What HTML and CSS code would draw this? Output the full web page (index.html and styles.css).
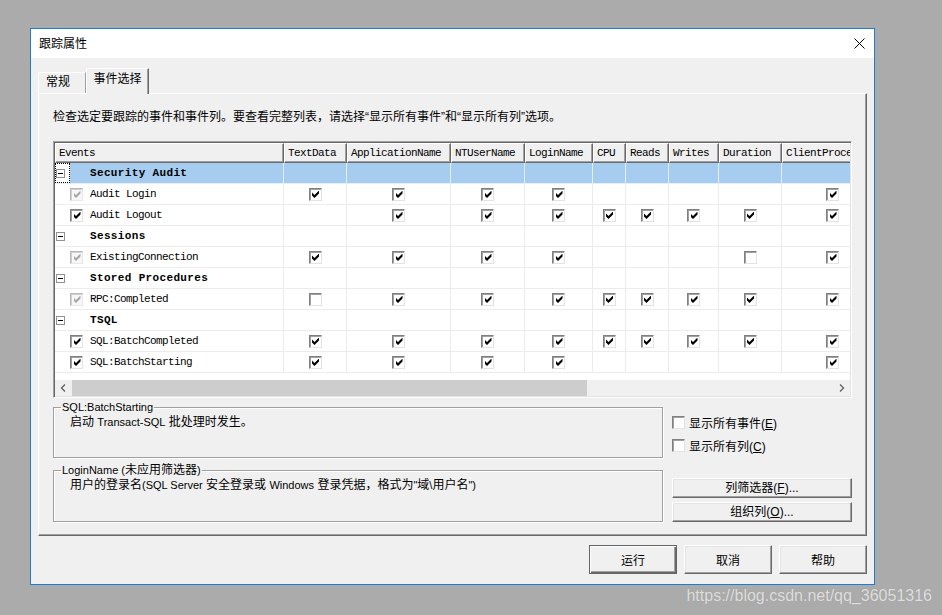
FILE: index.html
```html
<!DOCTYPE html>
<html lang="zh-CN">
<head>
<meta charset="utf-8">
<title>跟踪属性</title>
<link rel="stylesheet" href="styles.css">
</head>
<body>
<div class="dialog">
  <div class="titlebar">
    <span class="title">跟踪属性</span>
    <svg class="close" width="11" height="11" viewBox="0 0 11 11"><path d="M0.5 0.5L10.5 10.5M10.5 0.5L0.5 10.5" stroke="#000" stroke-width="1" fill="none"/></svg>
  </div>
  <div class="dbody">
    <div class="tabs">
      <div class="tab">常规</div>
      <div class="tab sel">事件选择</div>
    </div>
    <div class="panel">
      <div class="instr">检查选定要跟踪的事件和事件列。要查看完整列表，请选择“显示所有事件”和“显示所有列”选项。</div>
      <div class="grid">
        <div class="gview">
          <div class="grow ghead">
            <div class="hc">Events</div><div class="hc">TextData</div><div class="hc">ApplicationName</div><div class="hc">NTUserName</div><div class="hc">LoginName</div><div class="hc">CPU</div><div class="hc">Reads</div><div class="hc">Writes</div><div class="hc">Duration</div><div class="hc">ClientProce</div>
          </div>
          <div class="grow hl">
            <div class="c ev"><span class="lead focus"><i class="exp"></i></span><b>Security Audit</b></div><div class="c"></div><div class="c"></div><div class="c"></div><div class="c"></div><div class="c"></div><div class="c"></div><div class="c"></div><div class="c"></div><div class="c"></div>
          </div>
          <div class="grow">
            <div class="c ev"><i class="ck on dis evck"></i><span>Audit Login</span></div><div class="c"><i class="ck on"></i></div><div class="c"><i class="ck on"></i></div><div class="c"><i class="ck on"></i></div><div class="c"><i class="ck on"></i></div><div class="c"></div><div class="c"></div><div class="c"></div><div class="c"></div><div class="c"><i class="ck on"></i></div>
          </div>
          <div class="grow">
            <div class="c ev"><i class="ck on evck"></i><span>Audit Logout</span></div><div class="c"></div><div class="c"><i class="ck on"></i></div><div class="c"><i class="ck on"></i></div><div class="c"><i class="ck on"></i></div><div class="c"><i class="ck on"></i></div><div class="c"><i class="ck on"></i></div><div class="c"><i class="ck on"></i></div><div class="c"><i class="ck on"></i></div><div class="c"><i class="ck on"></i></div>
          </div>
          <div class="grow">
            <div class="c ev"><span class="lead"><i class="exp"></i></span><b>Sessions</b></div><div class="c"></div><div class="c"></div><div class="c"></div><div class="c"></div><div class="c"></div><div class="c"></div><div class="c"></div><div class="c"></div><div class="c"></div>
          </div>
          <div class="grow">
            <div class="c ev"><i class="ck on dis evck"></i><span>ExistingConnection</span></div><div class="c"><i class="ck on"></i></div><div class="c"><i class="ck on"></i></div><div class="c"><i class="ck on"></i></div><div class="c"><i class="ck on"></i></div><div class="c"></div><div class="c"></div><div class="c"></div><div class="c"><i class="ck"></i></div><div class="c"><i class="ck on"></i></div>
          </div>
          <div class="grow">
            <div class="c ev"><span class="lead"><i class="exp"></i></span><b>Stored Procedures</b></div><div class="c"></div><div class="c"></div><div class="c"></div><div class="c"></div><div class="c"></div><div class="c"></div><div class="c"></div><div class="c"></div><div class="c"></div>
          </div>
          <div class="grow">
            <div class="c ev"><i class="ck on dis evck"></i><span>RPC:Completed</span></div><div class="c"><i class="ck"></i></div><div class="c"><i class="ck on"></i></div><div class="c"><i class="ck on"></i></div><div class="c"><i class="ck on"></i></div><div class="c"><i class="ck on"></i></div><div class="c"><i class="ck on"></i></div><div class="c"><i class="ck on"></i></div><div class="c"><i class="ck on"></i></div><div class="c"><i class="ck on"></i></div>
          </div>
          <div class="grow">
            <div class="c ev"><span class="lead"><i class="exp"></i></span><b>TSQL</b></div><div class="c"></div><div class="c"></div><div class="c"></div><div class="c"></div><div class="c"></div><div class="c"></div><div class="c"></div><div class="c"></div><div class="c"></div>
          </div>
          <div class="grow">
            <div class="c ev"><i class="ck on evck"></i><span>SQL:BatchCompleted</span></div><div class="c"><i class="ck on"></i></div><div class="c"><i class="ck on"></i></div><div class="c"><i class="ck on"></i></div><div class="c"><i class="ck on"></i></div><div class="c"><i class="ck on"></i></div><div class="c"><i class="ck on"></i></div><div class="c"><i class="ck on"></i></div><div class="c"><i class="ck on"></i></div><div class="c"><i class="ck on"></i></div>
          </div>
          <div class="grow">
            <div class="c ev"><i class="ck on evck"></i><span>SQL:BatchStarting</span></div><div class="c"><i class="ck on"></i></div><div class="c"><i class="ck on"></i></div><div class="c"><i class="ck on"></i></div><div class="c"><i class="ck on"></i></div><div class="c"></div><div class="c"></div><div class="c"></div><div class="c"></div><div class="c"><i class="ck on"></i></div>
          </div>
          <div class="gfill"></div>
        </div>
        <div class="hscroll">
          <span class="sarr"><svg width="17" height="16" viewBox="0 0 17 16"><path d="M10 4.5L6.5 8L10 11.5" stroke="#606060" stroke-width="1.3" fill="none"/></svg></span>
          <span class="strack"><span class="sthumb"></span></span>
          <span class="sarr"><svg width="17" height="16" viewBox="0 0 17 16"><path d="M7 4.5L10.5 8L7 11.5" stroke="#606060" stroke-width="1.3" fill="none"/></svg></span>
        </div>
      </div>
      <div class="lower">
        <div class="lcol">
          <fieldset class="gbox">
            <legend><span class="lat">SQL:BatchStarting</span></legend>
            <p class="gtext">启动 <span class="lat">Transact-SQL</span> 批处理时发生。</p>
          </fieldset>
          <fieldset class="gbox gbox2">
            <legend><span class="lat">LoginName (</span>未应用筛选器<span class="lat">)</span></legend>
            <p class="gtext">用户的登录名<span class="lat">(SQL Server</span> 安全登录或 <span class="lat">Windows</span> 登录凭据，格式为<span class="lat">"</span>域<span class="lat">\</span>用户名<span class="lat">")</span></p>
          </fieldset>
        </div>
        <div class="rcol">
          <label class="opt"><i class="ck"></i><span>显示所有事件(<u>E</u>)</span></label>
          <label class="opt opt2"><i class="ck"></i><span>显示所有列(<u>C</u>)</span></label>
          <button class="btn wide first">列筛选器(<u>F</u>)...</button>
          <button class="btn wide">组织列(<u>O</u>)...</button>
        </div>
      </div>
    </div>
    <div class="actions">
      <button class="btn act def">运行</button>
      <button class="btn act">取消</button>
      <button class="btn act">帮助</button>
    </div>
  </div>
</div>
<div class="watermark">https://blog.csdn.net/qq_36051316</div>
</body>
</html>
```

FILE: styles.css
```css
* { box-sizing: border-box; }
html, body { margin: 0; }
body {
  background: #ababab;
  padding: 28px 0 0 30px;
  height: 615px;
  overflow: hidden;
  position: relative;
  font-family: "Liberation Sans", "Noto Sans CJK SC", sans-serif;
  font-size: 12px;
  color: #000;
}
.dialog {
  width: 845px;
  height: 557px;
  border: 1px solid #1a7fd4;
  background: #f0f0f0;
  display: flex;
  flex-direction: column;
}
.titlebar {
  flex: none;
  height: 29px;
  background: #fff;
  display: flex;
  align-items: center;
  justify-content: space-between;
  padding: 0 9px 0 8px;
}
.title { font-size: 12px; line-height: 16px; }
.close { display: block; }
.dbody {
  flex: 1;
  display: flex;
  flex-direction: column;
  padding: 10px 7px 0 7px;
}
.tabs {
  flex: none;
  display: flex;
  align-items: flex-end;
  height: 25px;
}
.tab {
  height: 21px;
  width: 48px;
  padding-left: 7px;
  line-height: 19px;
  border-top: 1px solid #fff;
  border-left: 1px solid #fff;
  border-right: 1px solid #a0a0a0;
  border-top-left-radius: 2px;
  background: #f0f0f0;
}
.tab.sel {
  position: relative;
  z-index: 1;
  width: 63px;
  height: 26px;
  margin-bottom: -1px;
  padding-left: 0;
  text-align: center;
  line-height: 21px;
  border-right: 1px solid #696969;
  box-shadow: inset -1px 0 0 #a0a0a0;
}
.panel {
  flex: none;
  height: 443px;
  border-top: 1px solid #fff;
  border-left: 1px solid #fff;
  border-right: 1px solid #696969;
  border-bottom: 1px solid #696969;
  box-shadow: inset -1px -1px 0 #a0a0a0;
  padding: 15px 14px 0 14px;
}
.instr { line-height: 16px; height: 16px; white-space: nowrap; }
.grid {
  margin-top: 16px;
  width: 799px;
  height: 257px;
  border: 1px solid;
  border-color: #a0a0a0 #fff #fff #a0a0a0;
  box-shadow: inset 1px 1px 0 #696969, inset -1px -1px 0 #e3e3e3;
  padding: 1px 1px 1px 1px;
  background: #fff;
  display: flex;
  flex-direction: column;
}
.gview {
  flex: 1;
  overflow: hidden;
  font-family: "Liberation Mono", monospace;
  font-size: 11px;
  letter-spacing: -0.6px;
}
.grow {
  display: grid;
  grid-template-columns: 229px 63px 104px 74px 68px 33px 43px 50px 63px 102px;
  width: 829px;
  height: 21px;
}
.ghead { height: 20px; }
.hc {
  height: 20px;
  background: #f0f0f0;
  border-top: 1px solid #fff;
  border-left: 1px solid #fff;
  border-right: 1px solid #696969;
  border-bottom: 1px solid #696969;
  box-shadow: inset -1px -1px 0 #a0a0a0;
  padding-left: 3px;
  line-height: 18px;
  white-space: nowrap;
  overflow: hidden;
  color: #000;
}
.c {
  height: 21px;
  border-right: 1px solid #ececec;
  border-bottom: 1px solid #ececec;
  display: flex;
  align-items: center;
  justify-content: center;
}
.hl .c { background: #a6cdf0; border-color: #e6eef7; }
.c.ev { justify-content: flex-start; white-space: nowrap; }
.c.ev b { margin-left: 20px; font-weight: bold; letter-spacing: 0.35px; }
.c.ev span:not(.lead) { margin-left: 7px; }
.lead {
  width: 15px;
  height: 20px;
  display: flex;
  align-items: center;
  padding-left: 1px;
  background: #fff;
}
.lead.focus { border: 1px dotted #000; padding-left: 0; }
.exp {
  width: 9px;
  height: 9px;
  border: 1px solid #919191;
  background: #fff;
  display: flex;
  align-items: center;
  justify-content: center;
}
.exp::after { content: ""; width: 5px; height: 1px; background: #000; }
.ck {
  flex: none;
  width: 13px;
  height: 13px;
  border: 1px solid;
  border-color: #808080 #e3e3e3 #e3e3e3 #808080;
  box-shadow: inset 1px 1px 0 #a0a0a0;
  background: #fff;
  display: flex;
  align-items: center;
  justify-content: center;
}
.ck.on::after {
  content: "";
  width: 7px;
  height: 8px;
  margin: 1px 0 0 1px;
  background: #000;
  clip-path: polygon(0 2px, 2.5px 4.5px, 7px 0, 7px 3px, 2.5px 7.5px, 0 5px);
}
.ck.dis { border-color: #b8b8b8 #e8e8e8 #e8e8e8 #b8b8b8; box-shadow: inset 1px 1px 0 #d0d0d0; background: #f7f7f7; }
.ck.dis::after { background: #a8a8a8; }
.evck { margin-left: 15px; }
.gfill { height: 7px; }
.hscroll {
  flex: none;
  height: 16px;
  display: flex;
  background: #f0f0f0;
}
.sarr { width: 17px; height: 16px; display: block; }
.sarr svg { display: block; }
.strack { flex: 1; display: flex; }
.sthumb { width: 515px; background: #cdcdcd; }
.lower {
  display: flex;
  gap: 9px;
  margin-top: 2px;
}
.lcol { width: 610px; display: flex; flex-direction: column; gap: 5px; }
.gbox {
  margin: 0;
  padding: 0;
  min-inline-size: 0;
  height: 58px;
  border: 1px solid #a0a0a0;
  box-shadow: inset 1px 1px 0 #fff, 1px 1px 0 #fff;
}
.gbox2 { height: 59px; }
.gbox legend {
  margin-left: 7px;
  padding: 0 1px;
  line-height: 14px;
  font-size: 12px;
}
.lat { font-size: 11px; }
.gtext { margin: 0 0 0 16px; line-height: 16px; white-space: nowrap; }
.rcol { width: 180px; display: flex; flex-direction: column; }
.opt { display: flex; align-items: center; gap: 4px; height: 16px; margin-top: 14px; }
.opt2 { margin-top: 7px; }
.btn {
  font-family: "Liberation Sans", "Noto Sans CJK SC", sans-serif;
  font-size: 12px;
  color: #000;
  background: #f0f0f0;
  border: 1px solid;
  border-color: #fff #696969 #696969 #fff;
  box-shadow: inset -1px -1px 0 #a0a0a0, inset 1px 1px 0 #e3e3e3;
  padding: 0;
  margin: 0;
}
.btn u { text-decoration: underline; }
.wide { width: 180px; height: 20px; margin-top: 4px; line-height: 18px; }
.wide.first { margin-top: 25px; }
.actions {
  display: flex;
  justify-content: flex-end;
  gap: 7px;
  margin-top: 9px;
}
.act { width: 88px; height: 29px; }
.act.def {
  border: 1px solid #646464;
  box-shadow: inset 1px 1px 0 #fff, inset -1px -1px 0 #696969, inset -2px -2px 0 #a0a0a0;
}
.watermark {
  position: absolute;
  right: 10px;
  top: 586px;
  font-family: "Liberation Sans", sans-serif;
  font-size: 16px;
  line-height: 19px;
  color: #dedede;
  text-shadow: 0 0 1px #9a9a9a;
}
```
